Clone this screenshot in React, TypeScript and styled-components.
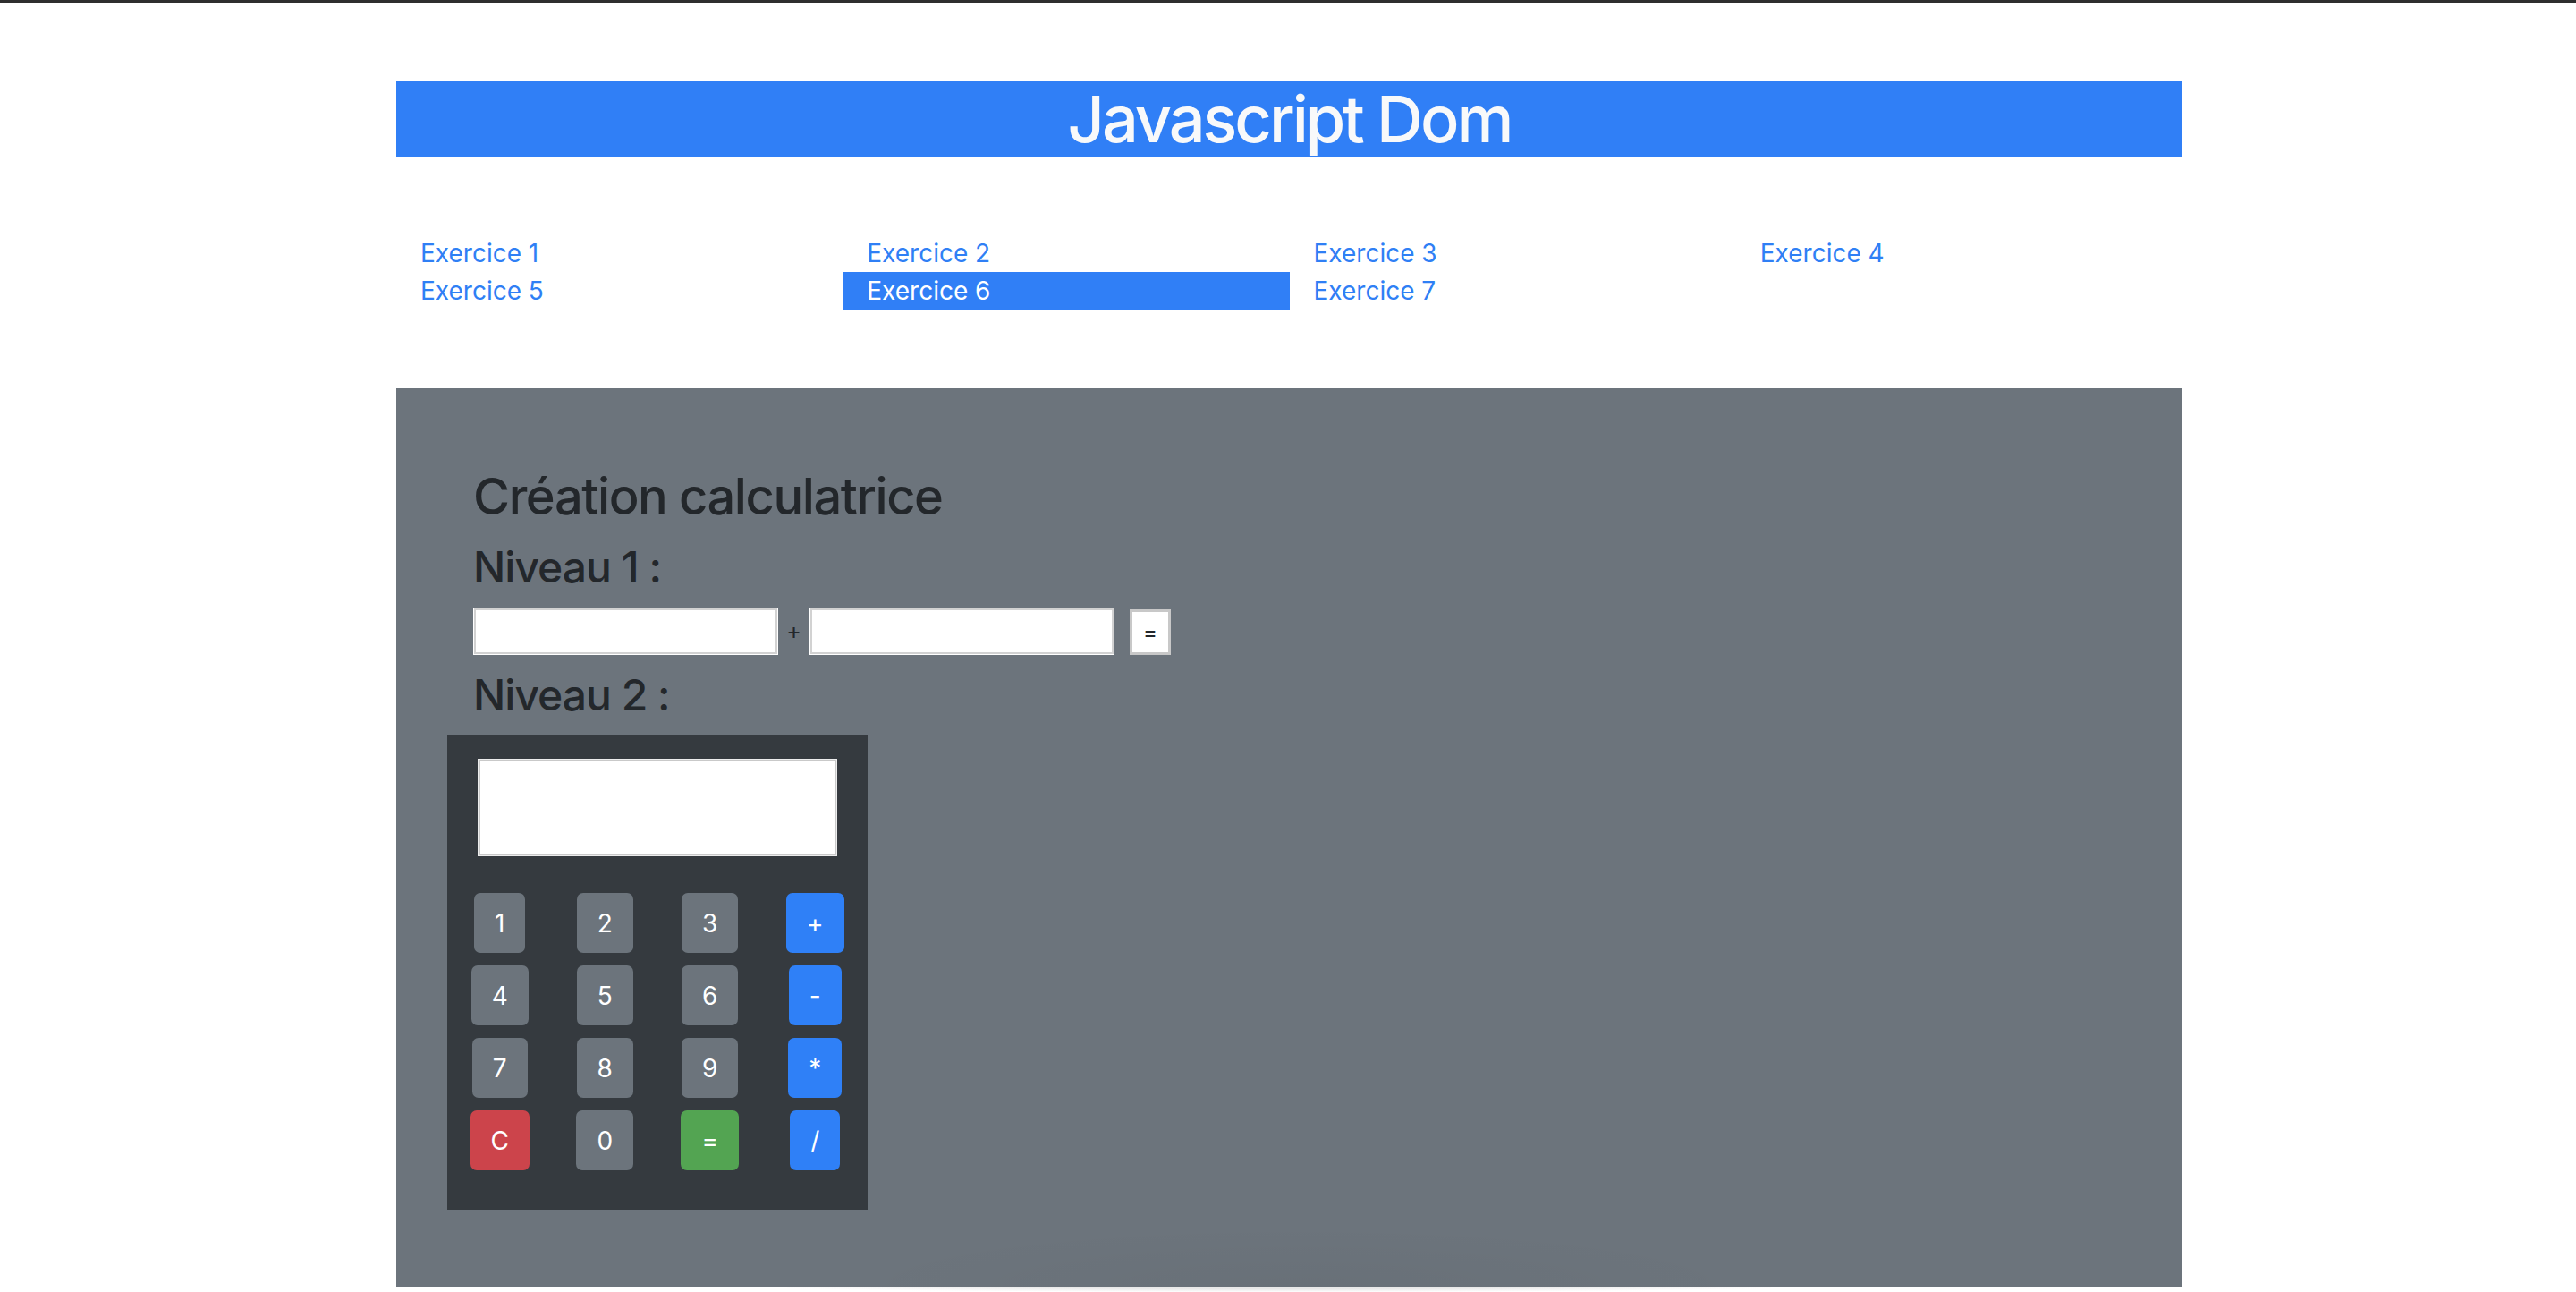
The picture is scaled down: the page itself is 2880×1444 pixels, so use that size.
import React from 'react';
import styled, { createGlobalStyle } from 'styled-components';

const GlobalStyle = createGlobalStyle`
	html, body {
		margin: 0;
		padding: 0;
		background: #ffffff;
	}
	body {
		font-family: Inter, 'Liberation Sans', sans-serif;
		color: #23272b;
	}
	* {
		box-sizing: border-box;
	}
`;

const Page = styled.div`
	border-top: 3px solid #2e2e2e;
	padding-top: 87px;
`;

// content column, a hair right of centre like the original
const Container = styled.div`
	width: 1997px;
	margin-left: 443px;
`;

const Banner = styled.header`
	height: 86px;
	background: #307ff6;
	display: flex;
	align-items: center;
	justify-content: center;
`;

const Title = styled.h1`
	margin: 0;
	font-size: 72px;
	line-height: 72px;
	font-weight: 500;
	letter-spacing: -3px;
	color: #f8f9fa;
`;

const Nav = styled.nav`
	margin-top: 86px;
	display: grid;
	grid-template-columns: repeat(4, 1fr);
`;

const NavLink = styled.a<{ $active?: boolean }>`
	display: block;
	padding: 0 27px;
	font-size: 28px;
	line-height: 42px;
	text-decoration: none;
	color: ${(p) => (p.$active ? '#ffffff' : '#2f7ff5')};
	background: ${(p) => (p.$active ? '#307ff6' : 'transparent')};
`;

const Section = styled.section`
	position: relative;
	margin-top: 88px;
	background: #6c747c;
	padding: 88px 86px 86px;

	&::after {
		content: '';
		position: absolute;
		left: 480px;
		bottom: 0;
		width: 1060px;
		height: 70px;
		background: radial-gradient(ellipse at bottom, rgba(0, 0, 0, 0.035), transparent 70%);
		pointer-events: none;
	}
`;

const Heading = styled.h3`
	margin: 0 0 16px;
	font-size: 56px;
	line-height: 1.2;
	font-weight: 500;
	letter-spacing: -1.4px;
	color: #23272b;
`;

const Level = styled.h4`
	margin: 0 0 16px;
	font-size: 48px;
	line-height: 1.2;
	font-weight: 500;
	letter-spacing: -1px;
	color: #23272b;
`;

const SumRow = styled.div`
	display: flex;
	align-items: flex-end;
	margin-bottom: 16px;
`;

const NumberInput = styled.input`
	width: 341px;
	height: 53px;
	background: #ffffff;
	border: 1px solid #ffffff;
	box-shadow: inset 0 0 0 2px #d2d2d2;
	outline: none;
	padding: 0 8px;
	font-size: 26px;
`;

const Plus = styled.span`
	align-self: center;
	width: 35px;
	text-align: center;
	font-size: 25px;
	line-height: 1;
	color: #23272b;
`;

const EqualButton = styled.button`
	margin-left: 17px;
	width: 46px;
	height: 51px;
	padding: 0;
	background: #ffffff;
	border: 3px solid #c8c8c8;
	font-family: Inter, 'Liberation Sans', sans-serif;
	font-size: 24px;
	color: #23272b;
`;

const Calculator = styled.div`
	width: 470px;
	margin-left: -29px;
	background: #353a3f;
	padding: 28px 0 44px;
`;

const Screen = styled.div`
	width: 400px;
	height: 107px;
	margin: 0 auto;
	background: #ffffff;
	border: 2px solid #c9c9c9;
	box-shadow: 0 0 0 1px #ededed;
`;

const Keys = styled.div`
	margin-top: 42px;
	display: grid;
	grid-template-columns: repeat(4, 1fr);
	row-gap: 14px;
	justify-items: center;
`;

type Variant = 'gray' | 'blue' | 'red' | 'green';

const keyColors: Record<Variant, string> = {
	gray: '#6c747c',
	blue: '#2f80f7',
	red: '#cc444b',
	green: '#53a452'
};

const Key = styled.button<{ $variant: Variant }>`
	height: 67px;
	padding: 0 23px;
	border: none;
	border-radius: 7px;
	background: ${(p) => keyColors[p.$variant]};
	color: #ffffff;
	font-family: Inter, 'Liberation Sans', sans-serif;
	font-size: 28px;
	line-height: 1;
`;

const Shadow = styled.div`
	width: 1100px;
	height: 6px;
	margin-left: 880px;
	background: radial-gradient(ellipse at top, #e8e8e8 30%, rgba(255, 255, 255, 0) 75%);
`;

const links = [
	'Exercice 1',
	'Exercice 2',
	'Exercice 3',
	'Exercice 4',
	'Exercice 5',
	'Exercice 6',
	'Exercice 7'
];

const keys: { label: string; variant: Variant }[] = [
	{ label: '1', variant: 'gray' },
	{ label: '2', variant: 'gray' },
	{ label: '3', variant: 'gray' },
	{ label: '+', variant: 'blue' },
	{ label: '4', variant: 'gray' },
	{ label: '5', variant: 'gray' },
	{ label: '6', variant: 'gray' },
	{ label: '-', variant: 'blue' },
	{ label: '7', variant: 'gray' },
	{ label: '8', variant: 'gray' },
	{ label: '9', variant: 'gray' },
	{ label: '*', variant: 'blue' },
	{ label: 'C', variant: 'red' },
	{ label: '0', variant: 'gray' },
	{ label: '=', variant: 'green' },
	{ label: '/', variant: 'blue' }
];

export default function App() {
	return (
		<>
			<GlobalStyle />
			<Page>
				<Container>
					<Banner>
						<Title>Javascript Dom</Title>
					</Banner>
					<Nav>
						{links.map((label) => (
							<NavLink key={label} href="#" $active={label === 'Exercice 6'}>
								{label}
							</NavLink>
						))}
					</Nav>
					<Section>
						<Heading>Création calculatrice</Heading>
						<Level>Niveau 1 :</Level>
						<SumRow>
							<NumberInput type="text" />
							<Plus>+</Plus>
							<NumberInput type="text" />
							<EqualButton>=</EqualButton>
						</SumRow>
						<Level>Niveau 2 :</Level>
						<Calculator>
							<Screen />
							<Keys>
								{keys.map((k) => (
									<Key key={k.label} $variant={k.variant}>
										{k.label}
									</Key>
								))}
							</Keys>
						</Calculator>
					</Section>
				</Container>
				<Shadow />
			</Page>
		</>
	);
}
